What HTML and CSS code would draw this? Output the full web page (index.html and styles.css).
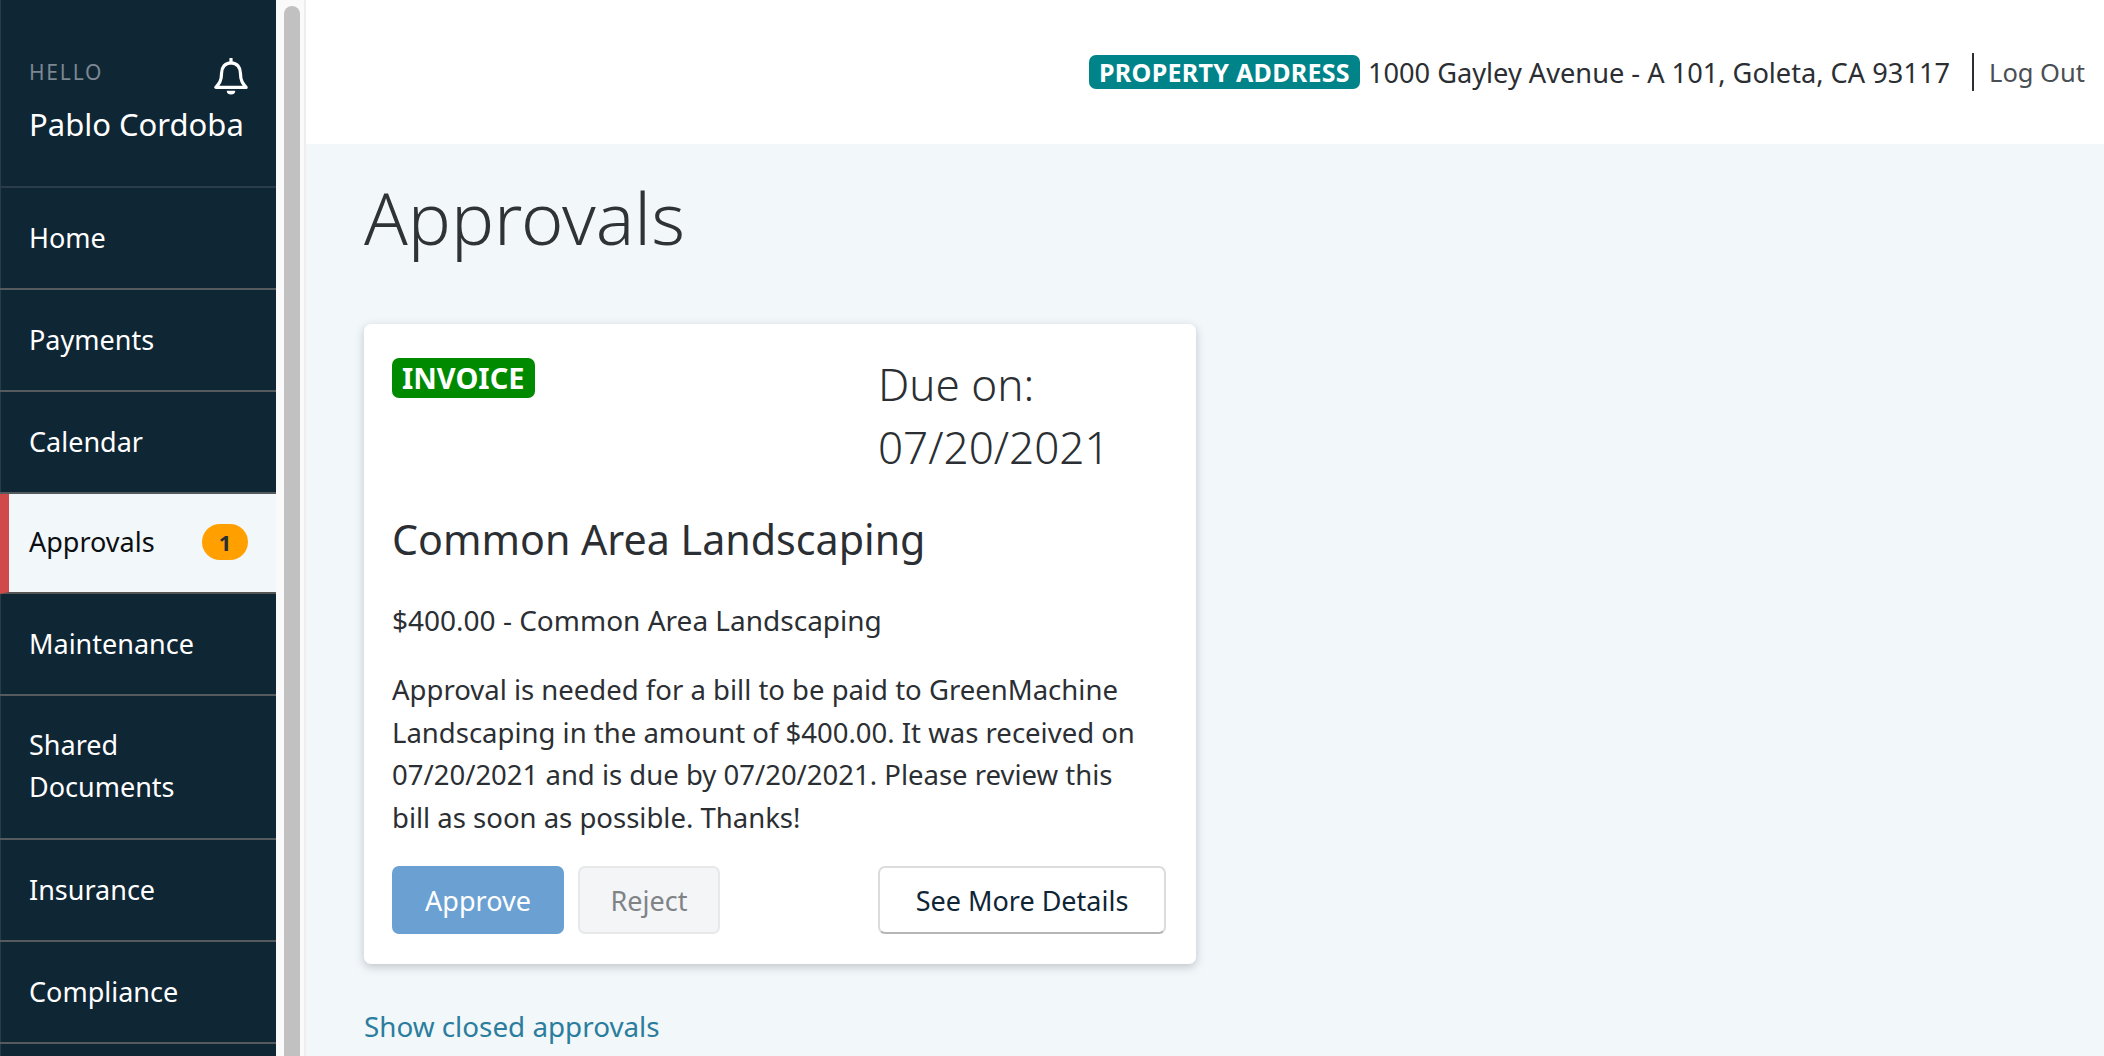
FILE: index.html
```html
<!DOCTYPE html>
<html lang="en">
<head>
    <meta charset="UTF-8">
    <title>Approvals</title>
    <link rel="stylesheet" href="styles.css">
</head>
<body>
    <div class="sidebar">
        <div class="user-box">
            <div class="user-top">
                <span class="hello">HELLO</span>
                <svg class="bell" viewBox="0 0 36 40" width="34" height="38" fill="none" stroke="#fff" stroke-width="3.4" stroke-linejoin="round">
                    <path d="M18 5c-6.500 0-10 5-10 11 0 8-2.500 11-6 15h32c-3.500-4-6-7-6-15 0-6-3.500-11-10-11z"/>
                    <path d="M18 1v4" stroke-linecap="round"/>
                    <path d="M13.500 34.500a4.500 4 0 0 0 9 0z" fill="#fff" stroke="none"/>
                </svg>
            </div>
            <div class="user-name">Pablo Cordoba</div>
        </div>
        <a class="nav-item">Home</a>
        <a class="nav-item">Payments</a>
        <a class="nav-item">Calendar</a>
        <a class="nav-item active">Approvals <span class="count">1</span></a>
        <a class="nav-item">Maintenance</a>
        <a class="nav-item tall">Shared<br>Documents</a>
        <a class="nav-item">Insurance</a>
        <a class="nav-item">Compliance</a>
    </div>

    <div class="scroll-track"><div class="scroll-thumb"></div></div>

    <div class="main">
        <div class="topbar">
            <span class="label label-teal">PROPERTY ADDRESS</span>
            <span class="address">1000 Gayley Avenue - A 101, Goleta, CA 93117</span>
            <a class="logout">Log Out</a>
        </div>

        <div class="content">
            <h1>Approvals</h1>

            <div class="card">
                <div class="card-head">
                    <div><span class="label label-green">INVOICE</span></div>
                    <div class="due">Due on:<br>07/20/2021</div>
                </div>
                <h2>Common Area Landscaping</h2>
                <p class="amount">$400.00 - Common Area Landscaping</p>
                <p class="desc">Approval is needed for a bill to be paid to GreenMachine Landscaping in the amount of $400.00. It was received on 07/20/2021 and is due by 07/20/2021. Please review this bill as soon as possible. Thanks!</p>
                <div class="actions">
                    <button class="btn btn-approve">Approve</button>
                    <button class="btn btn-reject">Reject</button>
                    <button class="btn btn-more">See More Details</button>
                </div>
            </div>

            <a class="closed-link">Show closed approvals</a>
        </div>
    </div>
</body>
</html>
```

FILE: styles.css
```css
html, body {
    height: 100%;
    overflow: hidden;
}
body {
    margin: 0;
    display: flex;
    font-family: "Noto Sans", sans-serif;
    font-size: 27px;
    color: #2b2f33;
    background-color: #f2f7fa;
}

/* sidebar */
.sidebar {
    width: 276px;
    flex-shrink: 0;
    background-color: #0f2635;
    box-shadow: inset 1px 0 0 #2a3c4a;
    color: #fff;
    overflow: hidden;
}
.user-box {
    height: 188px;
    box-sizing: border-box;
    padding: 56px 0 0 29px;
    border-bottom: 2px solid #2a3c4a;
}
.user-top {
    display: flex;
    align-items: flex-start;
    justify-content: space-between;
    padding-right: 28px;
    height: 48px;
}
.hello {
    font-size: 21px;
    letter-spacing: 1.800px;
    line-height: 32px;
    color: #7b8791;
}
.bell {
    margin-top: 2px;
}
.user-name {
    font-size: 31px;
    line-height: 40px;
    white-space: nowrap;
}
.nav-item {
    display: flex;
    align-items: center;
    justify-content: space-between;
    box-sizing: border-box;
    min-height: 102px;
    padding: 29px 28px 29px 29px;
    line-height: 42px;
    border-bottom: 2px solid #555a5e;
}
.nav-item.tall {
    display: block;
    padding-top: 28px;
    padding-bottom: 30px;
}
.nav-item.active {
    min-height: 100px;
    padding-top: 27px;
    padding-bottom: 29px;
    padding-left: 20px;
    background-color: #f2f7fa;
    color: #0b0f12;
    border-left: 9px solid #d04a4a;
    border-bottom-color: #555;
}
.count {
    width: 46px;
    height: 36px;
    line-height: 36px;
    border-radius: 18px;
    text-align: center;
    background-color: #ffa000;
    color: #2b2f33;
    font-size: 22px;
    font-weight: 700;
}

/* fake scrollbar */
.scroll-track {
    width: 30px;
    flex-shrink: 0;
    box-sizing: border-box;
    padding: 6px 4px 0 8px;
    background-color: #fafafa;
    border-right: 2px solid #eeeeee;
}
.scroll-thumb {
    height: 100%;
    background-color: #c1c1c1;
    border-radius: 8px 8px 0 0;
}

/* main */
.main {
    flex: 1;
    min-width: 0;
}
.topbar {
    height: 144px;
    box-sizing: border-box;
    background-color: #fff;
    display: flex;
    align-items: center;
    justify-content: flex-end;
    padding: 0 19px 0 0;
}
.label {
    display: inline-block;
    color: #fff;
    font-weight: 700;
    border-radius: 7px;
}
.label-teal {
    background-color: #008489;
    font-size: 25px;
    letter-spacing: 0.300px;
    line-height: 34px;
    padding: 0 10px;
}
.label-green {
    background-color: #008a00;
    font-size: 29px;
    line-height: 40px;
    padding: 0 10px;
}
.address {
    margin-left: 8px;
    padding-right: 22px;
    font-size: 27.200px;
    white-space: nowrap;
}
.logout {
    border-left: 2px solid #2b2f33;
    padding-left: 15px;
    font-size: 25.500px;
    line-height: 38px;
    color: #4a4f54;
}
.content {
    padding: 0 58px;
}
h1 {
    font-size: 72px;
    font-weight: 300;
    line-height: 96px;
    margin: 0;
    padding: 25px 0 59px;
    color: #2f3336;
}
.card {
    width: 832px;
    height: 640px;
    box-sizing: border-box;
    padding: 34px 28px 0;
    background-color: #fff;
    border-radius: 7px;
    box-shadow: 0 3px 10px rgba(60, 70, 80, 0.28);
}
.card-head {
    display: grid;
    grid-template-columns: 486px 1fr;
    height: 133px;
}
.due {
    font-size: 44px;
    font-weight: 300;
    line-height: 63px;
    margin-top: -5px;
}
h2 {
    font-size: 41.200px;
    font-weight: 400;
    line-height: 56px;
    margin: 20px 0 0;
}
.amount {
    margin: 32px 0 0;
    font-size: 28px;
    line-height: 42px;
}
.desc {
    margin: 28px 0 0;
    padding-right: 30px;
    font-size: 27.500px;
    line-height: 42.500px;
}
.actions {
    display: flex;
    gap: 14px;
    margin-top: 27px;
}
.btn {
    font-family: inherit;
    font-size: 27px;
    height: 68px;
    border-radius: 7px;
    box-sizing: border-box;
}
.btn-approve {
    width: 172px;
    background-color: #6ba1d2;
    border: none;
    color: #fff;
}
.btn-reject {
    width: 142px;
    background-color: #f3f5f7;
    border: 2px solid #e6e8ea;
    color: #808386;
}
.btn-more {
    width: 288px;
    margin-left: auto;
    margin-right: 2px;
    background-color: #fff;
    border: 2px solid #dcdcdc;
    border-bottom-color: #b5b5b5;
    color: #0f2535;
}
.closed-link {
    display: block;
    margin-top: 41px;
    font-size: 27.800px;
    color: #2b7d9e;
    line-height: 42px;
}
```
